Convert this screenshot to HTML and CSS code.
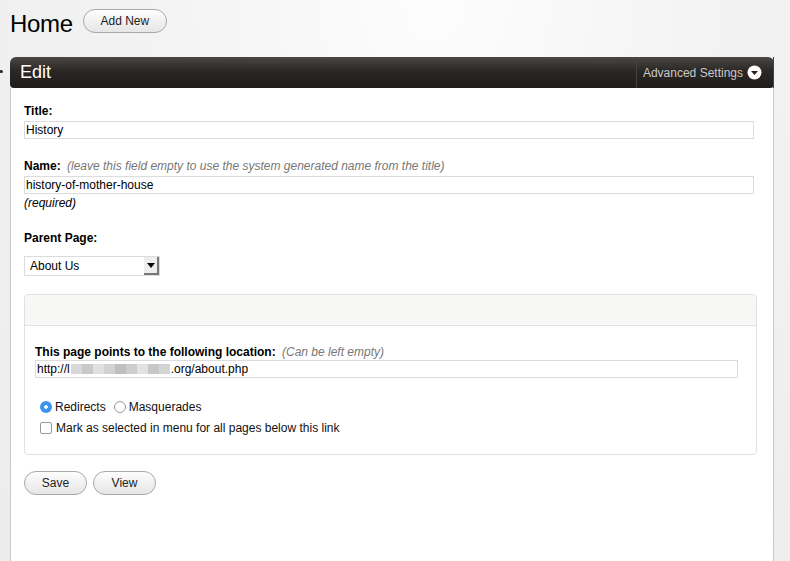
FILE: index.html
```html
<!DOCTYPE html>
<html lang="en">
<head>
  <meta charset="UTF-8">
  <title>Home - Edit</title>
  <link rel="stylesheet" href="styles.css">
</head>
<body>
  <div class="page-head">
    <h1>Home</h1>
    <button class="pill small">Add New</button>
  </div>

  <div class="panel">
    <span class="marker"></span>
    <div class="panel-bar">
      <h2>Edit</h2>
      <div class="adv">
        Advanced Settings
        <svg width="15" height="15" viewBox="0 0 15 15"><circle cx="7.5" cy="7.5" r="7" fill="#fff"/><path d="M4 6 L11 6 L7.5 10 Z" fill="#222"/></svg>
      </div>
    </div>

    <div class="panel-body">
      <div class="field">
        <label>Title:</label>
        <input type="text" class="text" value="History">
      </div>

      <div class="field">
        <label>Name: <em class="hint">(leave this field empty to use the system generated name from the title)</em></label>
        <input type="text" class="text" value="history-of-mother-house">
        <em class="req">(required)</em>
      </div>

      <div class="field parent">
        <label>Parent Page:</label>
        <div class="select">
          <span>About Us</span>
          <span class="sel-btn"><svg width="8" height="5" viewBox="0 0 8 5"><path d="M0 0 L8 0 L4 5 Z" fill="#000"/></svg></span>
        </div>
      </div>

      <div class="box">
        <div class="box-head"></div>
        <div class="box-body">
          <label>This page points to the following location: <em class="hint">(Can be left empty)</em></label>
          <div class="text url">http://l<span class="blur"><i style="background:#d8d8d8"></i><i style="background:#c9c9c9"></i><i style="background:#e0e0e0"></i><i style="background:#d2d2d2"></i><i style="background:#bfbfbf"></i><i style="background:#cdcdcd"></i><i style="background:#e2e2e2"></i><i style="background:#c7c7c7"></i><i style="background:#d4d4d4"></i></span>.org/about.php</div>

          <div class="options">
            <span class="radio on"></span> Redirects
            <span class="radio"></span> Masquerades
          </div>
          <div class="options">
            <span class="check"></span> Mark as selected in menu for all pages below this link
          </div>
        </div>
      </div>

      <div class="actions">
        <button class="pill">Save</button>
        <button class="pill">View</button>
      </div>
    </div>
  </div>
</body>
</html>
```

FILE: styles.css
```css
body {
  margin: 0;
  height: 561px;
  overflow: hidden;
  font-family: "Liberation Sans", Arial, sans-serif;
  color: #000;
  background: radial-gradient(ellipse at 55% 0%, #fdfdfd 0%, #f3f3f3 45%, #ececec 100%);
}

.page-head {
  display: flex;
  align-items: center;
  gap: 10px;
  height: 44px;
  padding: 0 10px;
}

h1 {
  margin: 0;
  font-size: 24px;
  font-weight: normal;
  letter-spacing: -0.3px;
  padding-top: 4px;
}

.pill {
  font-family: inherit;
  font-size: 12px;
  color: #222;
  border: 1px solid #a8a8a8;
  border-radius: 12px;
  background: linear-gradient(#fdfdfd, #e6e6e6);
  height: 24px;
  padding: 0 16px;
  cursor: pointer;
}

.pill.small {
  width: 84px;
  padding: 0;
  margin-top: -2px;
}

.panel {
  position: relative;
  margin: 13px 16px 0 10px;
}

.marker {
  position: absolute;
  left: -10px;
  top: 13px;
  width: 3px;
  height: 3px;
  border-radius: 0 2px 2px 0;
  background: #333;
}

.panel-bar {
  display: flex;
  align-items: center;
  height: 31px;
  border-radius: 6px 6px 4px 4px;
  background: linear-gradient(#4a4847, #2a2724 45%, #201d1a);
  color: #fff;
}

.panel-bar h2 {
  margin: 0;
  padding-left: 10px;
  flex: 1;
  font-size: 18px;
  font-weight: normal;
}

.adv {
  display: flex;
  align-items: center;
  gap: 4px;
  height: 31px;
  padding: 0 12px 0 6px;
  font-size: 12px;
  color: #c9c9c9;
  border-left: 1px solid #45423f;
  position: relative;
}

.adv::after {
  content: "";
  position: absolute;
  right: 0;
  top: 0;
  bottom: 0;
  border-left: 1px solid #45423f;
}

.adv svg {
  margin-bottom: 1px;
}

.panel-body {
  box-sizing: border-box;
  background: #fff;
  border-left: 1px solid #c8c8c8;
  border-right: 1px solid #c8c8c8;
  padding: 16px 19px 0 13px;
  height: 473px;
}

.field {
  margin-bottom: 20px;
}

label {
  display: block;
  font-size: 12px;
  font-weight: bold;
  margin-bottom: 3px;
}

.hint {
  font-weight: normal;
  color: #777;
  margin-left: 3px;
}

.text {
  display: block;
  box-sizing: border-box;
  width: 100%;
  height: 18px;
  border: 1px solid #dcdcdc;
  padding: 0 1px;
  font-family: inherit;
  font-size: 12px;
  color: #000;
  outline: none;
}

.req {
  display: block;
  font-size: 12px;
  margin-top: 2px;
}

.field.parent {
  margin-top: 21px;
  margin-bottom: 18px;
}

.field.parent label {
  margin-bottom: 11px;
}

.select {
  display: flex;
  align-items: center;
  width: 136px;
  height: 20px;
  box-sizing: border-box;
  border: 1px solid #dcdcdc;
  font-size: 12px;
  padding-left: 5px;
}

.select span:first-child {
  flex: 1;
}

.sel-btn {
  display: flex;
  align-items: center;
  justify-content: center;
  width: 15px;
  height: 18px;
  background: #eee;
  border-right: 2px solid #777;
  border-bottom: 2px solid #777;
  box-sizing: border-box;
}

.box {
  border: 1px solid #e0e0e0;
  border-radius: 4px;
  margin-right: -3px;
}

.box-head {
  height: 30px;
  background: #f7f7f5;
  border-bottom: 1px solid #e2e2e2;
  border-radius: 4px 4px 0 0;
}

.box-body {
  padding: 19px 18px 16px 10px;
}

.box-body label {
  margin-bottom: 1px;
}

.url {
  display: flex;
  align-items: center;
  margin-bottom: 18px;
}

.blur {
  display: inline-flex;
  height: 10px;
  margin: 0 1px;
}

.blur i {
  display: block;
  width: 11px;
  height: 10px;
}

.options {
  display: flex;
  align-items: center;
  font-size: 12px;
  color: #111;
  margin-left: 5px;
  height: 21px;
}

.radio {
  display: inline-block;
  width: 12px;
  height: 12px;
  border: 1px solid #999;
  border-radius: 50%;
  margin-right: 3px;
  background: #fff;
  box-sizing: border-box;
}

.options .radio:nth-of-type(2) {
  margin-left: 8px;
}

.radio.on {
  border: none;
  background: radial-gradient(circle, #fff 0 1.5px, #3d93f0 2px);
}

.check {
  display: inline-block;
  width: 12px;
  height: 12px;
  border: 1px solid #999;
  border-radius: 2px;
  margin-right: 4px;
  box-sizing: border-box;
}

.actions {
  display: flex;
  gap: 6px;
  margin-top: 16px;
}

.actions .pill {
  width: 63px;
  padding: 0;
}
```
